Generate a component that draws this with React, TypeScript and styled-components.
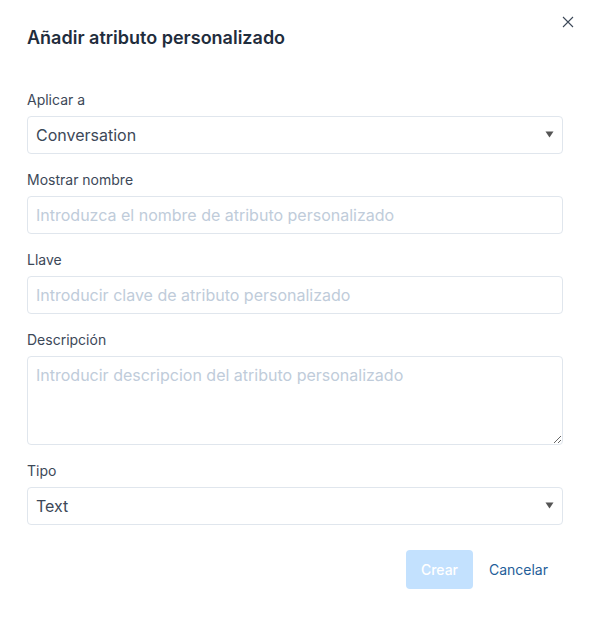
import React from "react";
import styled, { createGlobalStyle } from "styled-components";

const Global = createGlobalStyle`
  html, body { margin: 0; padding: 0; background: #fff; }
  body { font-family: Inter, "Noto Sans", sans-serif; -webkit-font-smoothing: antialiased; }
  * { box-sizing: border-box; }
`;

const Modal = styled.div`
  position: relative;
  width: 593px;
  height: 622px;
  background: #fff;
  padding: 26px 30px 0 27px;
`;

const CloseButton = styled.button`
  position: absolute;
  top: 14px;
  right: 17px;
  width: 16px;
  height: 16px;
  padding: 0;
  border: 0;
  background: transparent;
  display: flex;
  align-items: center;
  justify-content: center;
  color: #3c4858;
`;

const Title = styled.h2`
  margin: 0 0 40px;
  font-size: 18px;
  line-height: 24px;
  font-weight: 600;
  color: #1f2d3d;
`;

const Form = styled.form`
  display: flex;
  flex-direction: column;
`;

const Field = styled.label`
  display: flex;
  flex-direction: column;
  margin-bottom: 16px;
`;

const LabelText = styled.span`
  font-size: 14px;
  line-height: 20px;
  color: #3c4858;
  margin-bottom: 6px;
`;

const SelectWrap = styled.div`
  position: relative;
`;

const Select = styled.select`
  appearance: none;
  width: 100%;
  height: 38px;
  border: 1px solid #e0e6ed;
  border-radius: 4px;
  background: #fff;
  padding: 0 30px 0 8px;
  font-family: inherit;
  font-size: 16px;
  color: #3c4858;
  outline: none;
`;

const Arrow = styled.svg`
  position: absolute;
  right: 9px;
  top: 15px;
  pointer-events: none;
`;

const Input = styled.input`
  width: 100%;
  height: 38px;
  border: 1px solid #e0e6ed;
  border-radius: 4px;
  background: #fff;
  padding: 0 8px;
  font-family: inherit;
  font-size: 16px;
  color: #3c4858;
  outline: none;
  &::placeholder { color: #c0ccda; }
`;

const TextArea = styled.textarea`
  width: 100%;
  height: 89px;
  border: 1px solid #e0e6ed;
  border-radius: 4px;
  background: #fff;
  padding: 6px 8px;
  font-family: inherit;
  font-size: 16px;
  line-height: 24px;
  color: #3c4858;
  outline: none;
  resize: vertical;
  display: block;
  &::placeholder { color: #c0ccda; }
`;

const Actions = styled.div`
  display: flex;
  justify-content: flex-end;
  align-items: center;
  margin-top: 9px;
  padding-right: 6px;
`;

const PrimaryButton = styled.button`
  width: 67px;
  height: 39px;
  border: 0;
  border-radius: 4px;
  background: #c3e1fe;
  color: #fff;
  font-family: inherit;
  font-size: 14px;
  font-weight: 500;
`;

const LinkButton = styled.button`
  height: 39px;
  border: 0;
  background: transparent;
  padding: 0 9px 0 16px;
  color: #1f5e99;
  font-family: inherit;
  font-size: 14px;
`;

const Caret = () => (
  <Arrow width="9" height="7" viewBox="0 0 9 7">
    <path d="M0.5 0.5 H8.5 L4.5 6.5 Z" fill="#555" />
  </Arrow>
);

const SelectField = ({ label, value }: { label: string; value: string }) => (
  <Field>
    <LabelText>{label}</LabelText>
    <SelectWrap>
      <Select defaultValue={value}>
        <option>{value}</option>
      </Select>
      <Caret />
    </SelectWrap>
  </Field>
);

export default function App() {
  return (
    <>
      <Global />
      <Modal>
        <CloseButton aria-label="Cerrar">
          <svg width="12" height="12" viewBox="0 0 12 12">
            <path d="M1 1 L11 11 M11 1 L1 11" stroke="#3c4858" strokeWidth="1.1" />
          </svg>
        </CloseButton>
        <Title>Añadir atributo personalizado</Title>
        <Form onSubmit={(e) => e.preventDefault()}>
          <SelectField label="Aplicar a" value="Conversation" />
          <Field>
            <LabelText>Mostrar nombre</LabelText>
            <Input placeholder="Introduzca el nombre de atributo personalizado" />
          </Field>
          <Field>
            <LabelText>Llave</LabelText>
            <Input placeholder="Introducir clave de atributo personalizado" />
          </Field>
          <Field>
            <LabelText>Descripción</LabelText>
            <TextArea placeholder="Introducir descripcion del atributo personalizado" />
          </Field>
          <SelectField label="Tipo" value="Text" />
          <Actions>
            <PrimaryButton type="submit" disabled>Crear</PrimaryButton>
            <LinkButton type="button">Cancelar</LinkButton>
          </Actions>
        </Form>
      </Modal>
    </>
  );
}
